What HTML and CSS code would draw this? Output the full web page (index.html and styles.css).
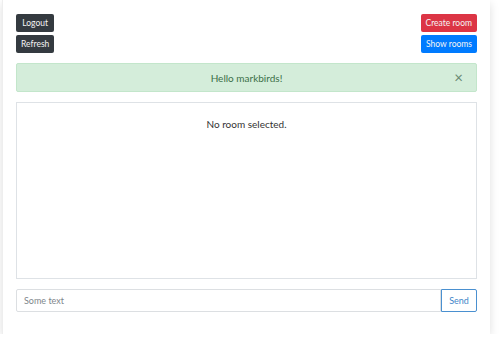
FILE: index.html
```html
<!DOCTYPE html>
<html>
<head>
<meta charset="utf-8">
<link rel="stylesheet" href="styles.css">
</head>
<body>
<div class="card">
  <div class="topbar">
    <div class="col">
      <button class="btn btn-dark">Logout</button>
      <button class="btn btn-dark">Refresh</button>
    </div>
    <div class="col">
      <button class="btn btn-danger">Create room</button>
      <button class="btn btn-primary">Show rooms</button>
    </div>
  </div>
  <div class="alert">
    <span>Hello markbirds!</span>
    <span class="close">&times;</span>
  </div>
  <div class="room">No room selected.</div>
  <div class="send-row">
    <input class="input" type="text" placeholder="Some text">
    <button class="btn-send">Send</button>
  </div>
</div>
</body>
</html>
```
FILE: styles.css
```css
html, body { margin: 0; padding: 0; background: #fff; }
body { font-family: Lato, "Open Sans", sans-serif; font-size: 9px; color: #212529; }
.card {
  margin: 0 10px 0 2px;
  width: 488px;
  height: 334px;
  box-sizing: border-box;
  padding: 14px 13px 0 13px;
  background: #fff;
  box-shadow: 0 3px 9px rgba(0,0,0,0.13);
  border-left: 1px solid #eee;
}
.topbar { display: flex; justify-content: space-between; }
.col { display: flex; flex-direction: column; gap: 3px; }
.col:last-child { align-items: flex-end; }
.btn {
  height: 18px;
  border: none;
  border-radius: 2px;
  padding: 0 5px;
  font-family: Lato, sans-serif;
  font-size: 8.5px;
  color: #f4f4f4;
  line-height: 18px;
}
.btn-dark { background: #343a40; }
.btn-danger { background: #dc3545; }
.btn-primary { background: #007bff; }
.alert {
  margin-top: 10px;
  height: 29px;
  box-sizing: border-box;
  background: #d4edda;
  border: 1px solid #c3e6cb;
  border-radius: 2px;
  color: #3b7048;
  position: relative;
  display: flex;
  align-items: center;
  justify-content: center;
  font-size: 10px;
}
.close {
  position: absolute;
  right: 13px;
  top: 6px;
  font-size: 15px;
  line-height: 15px;
  color: #6a8a72;
}
.room {
  margin-top: 10px;
  height: 177px;
  box-sizing: border-box;
  border: 1px solid #dee2e6;
  text-align: center;
  padding-top: 15px;
  font-size: 10px;
  color: #333;
}
.send-row { display: flex; margin-top: 10px; height: 23px; }
.input {
  flex: 1;
  box-sizing: border-box;
  height: 23px;
  border: 1px solid #dcdfe2;
  border-radius: 2px 0 0 2px;
  padding: 0 7px;
  font-family: Lato, sans-serif;
  font-size: 9px;
  outline: none;
}
.input::placeholder { color: #80868b; }
.btn-send {
  width: 36px;
  height: 23px;
  box-sizing: border-box;
  background: #fff;
  border: 1px solid #4a90d0;
  border-radius: 0 2px 2px 0;
  color: #3f86c9;
  font-family: Lato, sans-serif;
  font-size: 9px;
  padding: 0;
}
```
